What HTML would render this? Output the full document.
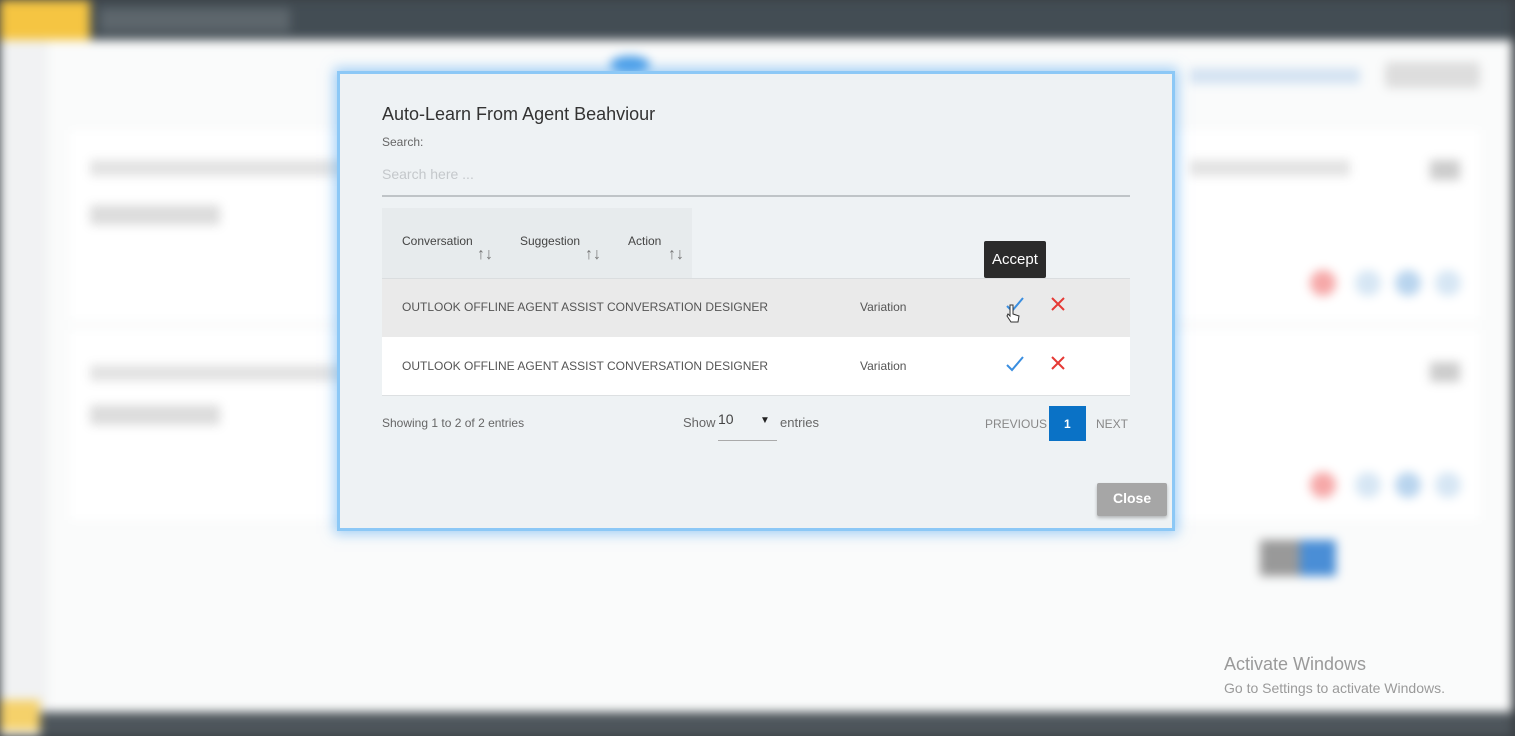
<!DOCTYPE html>
<html><head><style>
*{margin:0;padding:0;box-sizing:border-box}
body{width:1515px;height:736px;overflow:hidden;background:#3a3f44;font-family:"Liberation Sans",sans-serif;position:relative}
.bg{position:absolute;left:0;top:0;width:1512px;height:736px;background:#fafbfb;filter:blur(5px)}
.b{position:absolute}
.modal{position:absolute;left:340px;top:74px;width:832px;height:454px;background:#eef2f4;box-shadow:0 0 0 3px #8cc8f6,0 0 12px 6px rgba(90,170,240,.55)}
.t{position:absolute;white-space:nowrap;color:#444}
</style></head><body>
<div class="bg">
 <div class="b" style="left:0;top:0;width:1512px;height:40px;background:#434d54"></div>
 <div class="b" style="left:0;top:0;width:90px;height:40px;background:#f5c542"></div>
 <div class="b" style="left:100px;top:8px;width:190px;height:24px;background:#5d666c"></div>
 <div class="b" style="left:0;top:40px;width:48px;height:672px;background:#f1f2f3"></div>
 <div class="b" style="left:0;top:700px;width:40px;height:30px;background:#f5d16a"></div>
 <div class="b" style="left:40px;top:712px;width:1472px;height:24px;background:#4e565c"></div>
 <div class="b" style="left:70px;top:130px;width:1410px;height:190px;background:#fff"></div>
 <div class="b" style="left:70px;top:330px;width:1410px;height:190px;background:#fff"></div>
 <div class="b" style="left:90px;top:160px;width:260px;height:16px;background:#e2e2e2"></div>
 <div class="b" style="left:90px;top:205px;width:130px;height:20px;background:#dcdcdc"></div>
 <div class="b" style="left:90px;top:365px;width:260px;height:16px;background:#e2e2e2"></div>
 <div class="b" style="left:90px;top:405px;width:130px;height:20px;background:#dcdcdc"></div>
 <div class="b" style="left:1190px;top:160px;width:160px;height:16px;background:#e2e2e2"></div>
 <div class="b" style="left:1430px;top:160px;width:30px;height:20px;background:#ccc"></div>
 <div class="b" style="left:1430px;top:362px;width:30px;height:20px;background:#ccc"></div>
 <div class="b" style="left:1310px;top:270px;width:26px;height:26px;border-radius:50%;background:#f6a8a8"></div>
 <div class="b" style="left:1355px;top:270px;width:26px;height:26px;border-radius:50%;background:#d6e6f4"></div>
 <div class="b" style="left:1395px;top:270px;width:26px;height:26px;border-radius:50%;background:#b8d4ee"></div>
 <div class="b" style="left:1435px;top:270px;width:26px;height:26px;border-radius:50%;background:#d6e6f4"></div>
 <div class="b" style="left:1310px;top:472px;width:26px;height:26px;border-radius:50%;background:#f6a8a8"></div>
 <div class="b" style="left:1355px;top:472px;width:26px;height:26px;border-radius:50%;background:#d6e6f4"></div>
 <div class="b" style="left:1395px;top:472px;width:26px;height:26px;border-radius:50%;background:#b8d4ee"></div>
 <div class="b" style="left:1435px;top:472px;width:26px;height:26px;border-radius:50%;background:#d6e6f4"></div>
 <div class="b" style="left:1385px;top:62px;width:95px;height:26px;background:#ddd;border-radius:4px"></div>
 <div class="b" style="left:1190px;top:68px;width:170px;height:16px;background:#d4e3f2"></div>
 <div class="b" style="left:1260px;top:540px;width:50px;height:36px;background:#999"></div>
 <div class="b" style="left:1300px;top:540px;width:36px;height:36px;background:#4a8ed6"></div>
 <div class="b" style="left:610px;top:56px;width:40px;height:18px;background:#4a9ee8;border-radius:50%"></div>
</div>
<div class="modal">
 <div class="t" style="left:42px;top:30px;font-size:18px;color:#333">Auto-Learn From Agent Beahviour</div>
 <div class="t" style="left:42px;top:61px;font-size:12px;color:#666">Search:</div>
 <div class="t" style="left:42px;top:92px;font-size:14px;color:#c4c8cb">Search here ...</div>
 <div class="b" style="left:42px;top:121px;width:748px;height:2px;background:#bfc4c7"></div>
 <div class="b" style="left:42px;top:134px;width:310px;height:70px;background:#e7ebed"></div>
 <div class="t" style="left:62px;top:160px;font-size:12px">Conversation</div>
 <div class="t" style="left:137px;top:172px;font-size:16px;color:#777">↑↓</div>
 <div class="t" style="left:180px;top:160px;font-size:12px">Suggestion</div>
 <div class="t" style="left:245px;top:172px;font-size:16px;color:#777">↑↓</div>
 <div class="t" style="left:288px;top:160px;font-size:12px">Action</div>
 <div class="t" style="left:328px;top:172px;font-size:16px;color:#777">↑↓</div>
 <div class="b" style="left:644px;top:167px;width:62px;height:37px;background:#2b2b2b;border-radius:2px"></div>
 <div class="t" style="left:652px;top:177px;font-size:15px;color:#fff">Accept</div>
 <div class="b" style="left:42px;top:204px;width:748px;height:59px;background:#eaeaea;border-top:1px solid #dadddf"></div>
 <div class="b" style="left:42px;top:263px;width:748px;height:59px;background:#fff;border-bottom:1px solid #dde0e2"></div>
 <div class="t" style="left:62px;top:226px;font-size:12px;color:#555">OUTLOOK OFFLINE AGENT ASSIST CONVERSATION DESIGNER</div>
 <div class="t" style="left:520px;top:226px;font-size:12px;color:#555">Variation</div>
 <div class="t" style="left:62px;top:285px;font-size:12px;color:#555">OUTLOOK OFFLINE AGENT ASSIST CONVERSATION DESIGNER</div>
 <div class="t" style="left:520px;top:285px;font-size:12px;color:#555">Variation</div>
 <svg class="b" style="left:664px;top:222px" width="22" height="18"><path d="M3 10l5 5 11-13" stroke="#3a8ee0" stroke-width="2" fill="none"/></svg>
 <svg class="b" style="left:710px;top:222px" width="16" height="16"><path d="M2 2l12 12M14 2L2 14" stroke="#e53935" stroke-width="2"/></svg>
 <svg class="b" style="left:664px;top:281px" width="22" height="18"><path d="M3 10l5 5 11-13" stroke="#3a8ee0" stroke-width="2" fill="none"/></svg>
 <svg class="b" style="left:710px;top:281px" width="16" height="16"><path d="M2 2l12 12M14 2L2 14" stroke="#e53935" stroke-width="2"/></svg>
 <svg class="b" style="left:666px;top:230px" width="14" height="20"><path d="M4 1v11l-2-2-1 2 4 6h7l1-6-6-2V1z" fill="#fff" stroke="#333" stroke-width="1"/></svg>
 <div class="t" style="left:42px;top:342px;font-size:12px;color:#666">Showing 1 to 2 of 2 entries</div>
 <div class="t" style="left:343px;top:341px;font-size:13px;color:#666">Show</div>
 <div class="t" style="left:378px;top:337px;font-size:14px;color:#444">10</div>
 <div class="t" style="left:420px;top:341px;font-size:10px;color:#222">▼</div>
 <div class="b" style="left:378px;top:366px;width:59px;height:1px;background:#aaa"></div>
 <div class="t" style="left:440px;top:341px;font-size:13px;color:#666">entries</div>
 <div class="t" style="left:645px;top:343px;font-size:12px;color:#888">PREVIOUS</div>
 <div class="b" style="left:709px;top:332px;width:37px;height:35px;background:#0a72c6"></div>
 <div class="t" style="left:724px;top:343px;font-size:12px;color:#fff;font-weight:bold">1</div>
 <div class="t" style="left:756px;top:343px;font-size:12px;color:#888">NEXT</div>
 <div class="b" style="left:757px;top:409px;width:70px;height:33px;background:#a6a6a6;border-radius:2px;box-shadow:0 2px 3px rgba(0,0,0,.25)"></div>
 <div class="t" style="left:773px;top:416px;font-size:14px;color:#fff;font-weight:bold">Close</div>
</div>
<div class="t" style="left:1224px;top:654px;font-size:18px;color:#9a9a9a">Activate Windows</div>
<div class="t" style="left:1224px;top:680px;font-size:14px;color:#9a9a9a">Go to Settings to activate Windows.</div>
</body></html>
